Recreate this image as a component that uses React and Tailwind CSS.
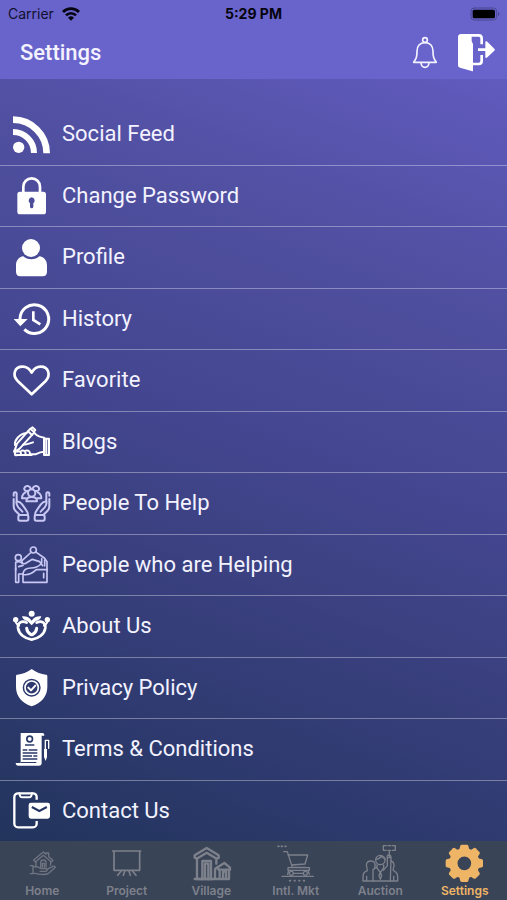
import clsx from "clsx";

function Icon({ size = "size-[37px]", box = "0 0 111 111", width = 5, children }) {
    return (
        <svg
            viewBox={box}
            className={clsx(size, "shrink-0 overflow-visible")}
            fill="none"
            stroke="currentColor"
            strokeWidth={width}
            strokeLinecap="round"
            strokeLinejoin="round"
            aria-hidden="true"
        >
            {children}
        </svg>
    );
}

const solid = { fill: "currentColor", stroke: "none" };

const feed = (
    <Icon>
        <circle cx="17" cy="94" r="17" {...solid} />
        <path d="M0 48a63 63 0 0 1 63 63" strokeWidth="18" strokeLinecap="butt" />
        <path d="M0 11a101 101 0 0 1 101 101" strokeWidth="20" strokeLinecap="butt" />
    </Icon>
);

const lock = (
    <Icon>
        <path d="M31 48V29a25 25 0 0 1 50 0v19" strokeWidth="8" />
        <path
            {...solid}
            fillRule="evenodd"
            d="M21 44h70a8 8 0 0 1 8 8v52a8 8 0 0 1-8 8H21a8 8 0 0 1-8-8V52a8 8 0 0 1 8-8zM56 61a10 10 0 0 0-5 18v10a5 5 0 0 0 10 0V79a10 10 0 0 0-5-18z"
        />
    </Icon>
);

const profile = (
    <Icon>
        <circle cx="54" cy="27" r="27" {...solid} />
        <path
            {...solid}
            d="M31 52c6 6 14 9 24 9s18-3 24-9c14 2 23 12 23 27v19c0 9-5 14-13 14H22c-8 0-13-5-13-14V79c0-15 9-25 22-27z"
        />
    </Icon>
);

const history = (
    <Icon>
        <path d="M21 57A43 43 0 1 1 34 88" strokeWidth="9" strokeLinecap="butt" />
        <path d="M2 57h42L22 79z" {...solid} />
        <path d="M61 34v26l21 13" strokeWidth="8" strokeLinecap="butt" strokeLinejoin="miter" />
    </Icon>
);

const heart = (
    <Icon>
        <path
            d="M56 97 14 57C-3 40 4 14 29 14c13 0 21 7 27 18 6-11 14-18 27-18 24 0 31 26 15 43z"
            strokeWidth="8"
        />
    </Icon>
);

const writing = (
    <Icon width={6}>
        <path d="M6 80 12 62 52 17l12 11-44 49-14 9z" />
        <path d="m45 25 12 11M54 17l4-4 9 8-4 5" />
        <path d="M6 66c-2-14 13-34 35-36" />
        <path d="M66 32c8 8 13 11 28 12v42c-12 0-17 3-26 8H50M60 58 48 62c-8 3-12 3-18 3" />
        <path d="M6 80c-5 5-3 9 2 8-5 6-2 11 4 8h44" />
        <path d="M14 86c6-3 10 0 10 8M26 83c7-2 12 2 12 11M38 83c8-3 14 3 13 11" />
        <path d="M93 47h15v49H93zM100 50v44" />
    </Icon>
);

const hand = (
    <>
        <path d="M11 50V27c0-7-9-7-9 0v5M11 50c8-2 12 2 17 9l10 14c6 8 7 10 7 16" />
        <path d="M2 42v22c0 6 2 10 6 14l12 12M11 50c-2 7 1 12 5 17l12 13" />
        <rect x="16" y="90" width="30" height="17" rx="5" />
    </>
);

const peopleToHelp = (
    <Icon width={6}>
        {hand}
        <g transform="translate(111 0) scale(-1 1)">{hand}</g>
        <circle cx="56" cy="24" r="11" />
        <path d="M45 18C36 20 31 12 35 7c4-6 15-6 18 3M67 18c9 2 14-6 10-11-4-6-15-6-18 3" />
        <path d="M40 49c0-9 6-13 16-13s16 4 16 13zM38 40H27c0-10 4-15 11-18M74 40h11c0-10-4-15-11-18" />
    </Icon>
);

const peopleHelping = (
    <Icon width={5}>
        <circle cx="61" cy="12" r="9" />
        <circle cx="16" cy="35" r="9" />
        <path d="M52 21 27 44M70 19l24 17 8 11v62H30V83" />
        <path d="M27 44c-2 6 2 10 9 9l22-13 22 7 9 12" />
        <path d="M8 49v60h9V84h13M8 49c7-4 13-3 19 2M17 62l13-4" />
        <path d="M30 83c2-13 12-17 24-17 14 0 22-4 30-12M32 86c14 2 26-4 38-15h33M86 38v12M95 42v18" />
        <path d="M92 82v13M8 66v6" />
    </Icon>
);

const about = (
    <Icon>
        <circle cx="56" cy="17" r="9" {...solid} />
        <circle cx="8" cy="35" r="8" {...solid} />
        <circle cx="103" cy="35" r="8" {...solid} />
        <path
            {...solid}
            d="M27 25c13-1 23 3 29 13 6-10 16-14 29-13-2 9-9 13-16 14L56 52 43 39c-7-1-14-5-16-14z"
        />
        <path d="M41 44c-14-8-28 0-26 16 3 19 20 32 41 35 21-3 38-16 41-35 2-16-12-24-26-16" strokeWidth="8" />
        <path d="M9 44c3 5 5 7 9 9M102 44c-3 5-5 7-9 9" strokeWidth="6" />
        <path d="M41 61c1 11 6 15 13 19M71 61c-1 11-6 15-13 19" strokeWidth="9" />
    </Icon>
);

const privacy = (
    <Icon>
        <path
            {...solid}
            fillRule="evenodd"
            d="M56 0c14 10 28 16 43 17 3 0 4 2 4 5v32c0 28-18 48-47 58C27 102 9 82 9 54V22c0-3 1-5 4-5C28 16 42 10 56 0zM56 29a27 27 0 1 0 0 54 27 27 0 0 0 0-54z"
        />
        <circle cx="56" cy="56" r="20" strokeWidth="5" />
        <path d="m46 56 8 8 13-14" strokeWidth="6" />
    </Icon>
);

const terms = (
    <Icon>
        <path
            {...solid}
            fillRule="evenodd"
            d="M23 6h65c5 0 6 3 6 8h-8v82c0 5-3 8-8 8H16c-5 0-8-3-8-8h15zM50 13a11 11 0 1 0 0 22 11 11 0 0 0 0-22zM36 40v4h28v-4zM29 55v4h14v-4zM47 55v4h26v-4zM29 64v4h44v-4zM29 73v4h28v-4zM61 73v4h12v-4zM29 82v4h44v-4zM24 93v3h46v-3z"
        />
        <circle cx="50" cy="24" r="6" {...solid} />
        <path d="M97 34v-6h10v24M97 30v24" strokeWidth="4" />
        <path d="M93 54h9v24l-4 12-5-12z" {...solid} />
    </Icon>
);

const contact = (
    <Icon>
        <path
            d="M71 23V15A11 11 0 0 0 60 4H15A11 11 0 0 0 4 15v80a11 11 0 0 0 11 11h45a11 11 0 0 0 11-11v-8"
            strokeWidth="7"
            strokeLinecap="butt"
        />
        <path d="M19 4c2 9 3 12 9 12h20c6 0 7-3 9-12" strokeWidth="6" />
        <path
            {...solid}
            fillRule="evenodd"
            d="M54 32h50a7 7 0 0 1 7 7v34a7 7 0 0 1-7 7H54a7 7 0 0 1-7-7V39a7 7 0 0 1 7-7zM58 42l-3 6 24 13 24-13-3-6-21 11z"
        />
    </Icon>
);

const home = (
    <Icon width={4}>
        <path d="m29 45 29-24 8 7v-4h8v11l13 11-5 5-24-20-24 20zM36 50v16M80 50v10" />
        <path d="M50 67V53a8 8 0 0 1 16 0v14M55 67V55h6v12" />
        <path d="M19 62h8v24h-8M27 66c12-4 18 2 25 5h13c6 1 6 7 0 8H48M67 74l20-10c6-2 9 2 4 6L72 86c-12 6-28 2-45-2" />
    </Icon>
);

const project = (
    <Icon width={5}>
        <path d="M18 18h77v58H18zM14 18h84" />
        <path d="m39 79-10 12M50 79l-4 12M63 79l4 12M74 79l10 12" />
    </Icon>
);

const village = (
    <Icon width={7}>
        <path d="M5 38v-7L41 9l36 22v8l-6 2-30-18-30 18-6-3zM12 43v59h46M70 44v12" />
        <path d="M28 102V48h26v54M36 102V56h10v46" />
        <path d="m75 66 19-12 17 14v6H76zM80 75v27H5M108 75v27H66V72l8-6M90 102V80h9v22" />
    </Icon>
);

const market = (
    <Icon width={4}>
        <path d="M3 4h3M13 4h3M24 4h3M38 107h2M52 107h2M66 107h2M80 107h2" strokeWidth="5" />
        <path d="M20 20h11l15 47h40M33 30h59l-8 27-40 3M33 68h64v8H33zM15 94h94" />
        <circle cx="43" cy="85" r="6" />
        <circle cx="85" cy="85" r="6" />
        <path d="M52 85h24M35 76l-3 12M93 76l4 12" />
    </Icon>
);

const auction = (
    <Icon width={4}>
        <path d="M73 2h-9v14h9M91 2h9v14h-9M78 2h8M78 16h8M82 16v20" />
        <path d="M76 38c-2-5 1-8 5-8s7 4 6 9l-2 69M76 40v22L64 76M76 38h9" />
        <circle cx="55" cy="45" r="14" />
        <path d="M41 43c8 0 13-4 18-10 3 6 6 8 10 9M45 60v9l10 14 10-14v-9M45 66l-12 8v34M55 83l-4 8 4 12 4-12z" />
        <path d="M38 67c4-12-1-19-12-19S10 57 15 70c3 7 0 8-5 10-6 3-7 8-7 18v10h104V98c0-11-2-15-8-18-5-3-8-4-5-10 5-11 1-20-7-22M14 94v14M95 94v14" />
    </Icon>
);

const teeth = [0, 45, 90, 135, 180, 225, 270, 315];

const gear = (
    <Icon>
        <circle cx="55" cy="55" r="33" strokeWidth="25" />
        {teeth.map(angle => (
            <path key={angle} d="M40 14 43 2q1-3 4-3h16q3 0 4 3l3 12z" {...solid} transform={`rotate(${angle} 55 55)`} />
        ))}
    </Icon>
);

const menu = [
    { label: "Social Feed", icon: feed },
    { label: "Change Password", icon: lock },
    { label: "Profile", icon: profile },
    { label: "History", icon: history },
    { label: "Favorite", icon: heart },
    { label: "Blogs", icon: writing },
    { label: "People To Help", icon: peopleToHelp, soft: true },
    { label: "People who are Helping", icon: peopleHelping, soft: true },
    { label: "About Us", icon: about },
    { label: "Privacy Policy", icon: privacy },
    { label: "Terms & Conditions", icon: terms },
    { label: "Contact Us", icon: contact },
];

const tabs = [
    { label: "Home", icon: home, dim: true },
    { label: "Project", icon: project },
    { label: "Village", icon: village },
    { label: "Intl. Mkt", icon: market },
    { label: "Auction", icon: auction },
    { label: "Settings", icon: gear, active: true },
];

function StatusBar() {
    return (
        <div className="grid grid-cols-3 items-center h-7 px-2 text-sm leading-7 font-['Inter',sans-serif] text-[#12102e]">
            <div className="flex items-center gap-2">
                <span>Carrier</span>
                <Icon size="w-[18px] h-[14px]" box="0 0 54 42">
                    <g stroke="#05040f" strokeWidth="8" strokeLinecap="butt">
                        <path d="M3 15a34 34 0 0 1 48 0" />
                        <path d="M12 25a21 21 0 0 1 30 0" />
                    </g>
                    <path d="M27 41 18 32a13 13 0 0 1 18 0z" fill="#05040f" stroke="none" />
                </Icon>
            </div>
            <span className="text-center font-bold text-[#05040f]">5:29 PM</span>
            <Icon size="w-[30px] h-[14px] justify-self-end" box="-3 0 90 42">
                <rect x="3" y="3" width="77" height="36" rx="10" stroke="#4a4692" strokeWidth="3" />
                <rect x="8" y="8" width="67" height="26" rx="5" fill="#000" stroke="none" />
                <path d="M84 15c6 2 6 10 0 12z" fill="#4a4692" stroke="none" />
            </Icon>
        </div>
    );
}

function Header() {
    return (
        <header className="bg-[#6964cc]">
            <StatusBar />
            <div className="flex items-center h-[51px] pl-5 pr-3 pb-0.5">
                <h1 className="text-[22px] font-medium">Settings</h1>
                <button aria-label="Notifications" className="ml-auto mr-5">
                    <Icon size="w-[26px] h-8" box="-2 0 78 96" width={5}>
                        <circle cx="37" cy="9" r="7" />
                        <path d="M37 17c-16 0-24 11-24 26 0 17-2 22-10 33h68c-8-11-10-16-10-33 0-15-8-26-24-26z" />
                        <path d="M25 78c1 9 5 13 12 13s11-4 12-13" />
                    </Icon>
                </button>
                <button aria-label="Log out" className="text-white">
                    <Icon width={8}>
                        <path d="M9 0h32v22l4 8v80c0 2-2 2-4 1L6 101c-4-1-6-4-6-8V9c0-5 4-9 9-9z" {...solid} />
                        <path d="M30 4h32c6 0 9 3 9 9v18M71 63v18c0 6-3 9-9 9H44M60 47h26" strokeLinecap="butt" />
                        <path d="M82 25c0-4 3-4 6-2l21 21c2 2 2 4 0 6L88 70c-3 3-6 2-6-2z" {...solid} />
                    </Icon>
                </button>
            </div>
        </header>
    );
}

function TabBar() {
    return (
        <nav className="grid grid-cols-6 h-[59px] bg-[#3a4457] font-['Inter',sans-serif]">
            {tabs.map(t => (
                <a
                    key={t.label}
                    href="#"
                    className={clsx(
                        "flex flex-col items-center pt-1 text-xs font-semibold",
                        t.active ? "text-[#efb566]" : "text-[#7d818b]"
                    )}
                >
                    <span className={clsx("mb-px", t.dim && "opacity-80")}>{t.icon}</span>
                    {t.label}
                </a>
            ))}
        </nav>
    );
}

export default function App() {
    return (
        <div className="flex flex-col min-h-screen text-[#f3f2ff] font-['Roboto',sans-serif]">
            <Header />
            <main className="flex flex-col flex-1 pt-[25px] bg-[linear-gradient(200deg,#615bbe_0%,#5150a2_22%,#43468f_48%,#3a407f_64%,#2e3a6f_82%,#22345c_100%)]">
                <ul className="flex flex-col flex-1 divide-y divide-white/35">
                    {menu.map(m => (
                        <li key={m.label} className="flex flex-1">
                            <a href="#" className="flex flex-1 items-center gap-3 px-3 py-2 text-[22px] leading-8">
                                <span className={clsx("ml-px", m.soft ? "text-[#c9c8f4]" : "text-white")}>{m.icon}</span>
                                {m.label}
                            </a>
                        </li>
                    ))}
                </ul>
            </main>
            <TabBar />
        </div>
    );
}
